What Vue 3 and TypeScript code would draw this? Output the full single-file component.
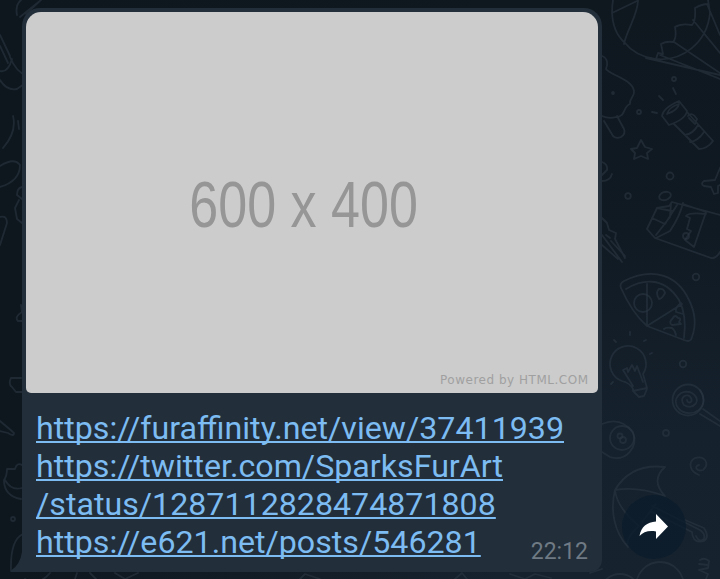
<script setup lang="ts">
interface LinkLine {
  text: string
  href: string
}

const links: LinkLine[] = [
  { text: 'https://furaffinity.net/view/37411939', href: 'https://furaffinity.net/view/37411939' },
  { text: 'https://twitter.com/SparksFurArt', href: 'https://twitter.com/SparksFurArt/status/1287112828474871808' },
  { text: '/status/1287112828474871808', href: 'https://twitter.com/SparksFurArt/status/1287112828474871808' },
  { text: 'https://e621.net/posts/546281', href: 'https://e621.net/posts/546281' },
]
const time = '22:12'
</script>

<template>
  <main class="chat">
    <svg class="wallpaper" viewBox="0 0 720 579" aria-hidden="true">
      <!-- parachute -->
      <path d="M613 0C610 20 615 34 625 43C632 52 643 57 655 59C682 62 707 43 710 13L708 0M638 0C638 15 627 29 624 44M612 13L637 1M656 59L658 53L663 54L661 44Q666 41 673 42Q677 38 675 27Q681 23 692 25Q696 21 695 8Q702 4 708 4M660 55L720 79M674 42L720 73M693 20L720 53M707 4L720 35M646 58L720 75" />
      <!-- ice cream -->
      <path d="M602 56C608 58 608 65 606 69C610 75 632 79 634 91C635 97 629 98 630 104C623 106 626 117 616 117Q609 119 602 116M604 121L613 136Q616 139 621 137Q626 134 624 129L617 116" />
      <circle cx="613" cy="93" r="1" />
      <!-- flashlight -->
      <path d="M662 116Q663 108 679 101L687 111Q686 119 669 125ZM667 114Q669 107 679 104Q678 110 667 114M674 124L699 149Q707 149 713 141L687 112M688 116Q692 111 697 119L695 124L689 118M685 135Q693 134 698 125M690 142Q698 141 704 132M673 88L676 94M659 96L663 100M652 112L657 113" />
      <circle cx="674" cy="79" r="2" /><circle cx="639" cy="112" r="2" />
      <!-- stars and dots -->
      <path d="M631 149L637 148L641 140L645 147L652 149L647 153L648 159L641 156L634 159L635 153ZM720 168L715 180L704 181Q700 184 704 186L711 187L714 194L718 193L718 186L720 185M602 162Q608 164 607 170L602 175M602 181Q610 181 612 174" />
      <circle cx="670" cy="176" r="3.5" /><circle cx="628" cy="196" r="2.8" /><circle cx="696" cy="277" r="3.3" />
      <!-- carton -->
      <path d="M655 238L647 229L657 208L669 206L672 202L720 215M655 238L711 258Q716 259 720 252M656 238L670 231Q680 216 683 203M671 203L670 217L656 235M652 218L665 224L677 205M657 208L672 211M683 204L706 212L694 247L685 240L691 231L687 229L690 218L686 216Q689 212 706 214" />
      <ellipse cx="665" cy="196" rx="6" ry="4" transform="rotate(-18 665 196)" /><circle cx="686" cy="236" r="3" />
      <!-- comet -->
      <path d="M602 218L607 223L609 230L616 233L615 239L625 258M602 235L622 262M602 245L618 259M611 241L625 256M606 235L610 238" />
      <!-- pizza -->
      <path d="M621 288Q619 284 624 281C654 266 678 276 689 300C697 316 695 329 692 337Q691 343 684 340L647 326Q632 313 621 288M626 289C641 280 663 275 679 300Q687 315 684 338M647 284L647 326L682 304M659 289Q664 288 665 293Q662 299 659 299Q655 292 659 289M673 318Q675 314 678 318Q682 318 679 322L681 324L672 325Q668 323 673 318M664 329Q666 327 672 328Q675 330 676 335M681 303Q675 307 676 312L683 314" />
      <circle cx="643" cy="303" r="9" />
      <!-- bulb -->
      <path d="M633 389Q630 383 622 381A18 18 0 1 1 643 374L647 388L633 391ZM634 392L639 397L644 396L647 389M633 386L623 370L627 368L628 372L632 365L635 371L637 366L643 382M630 332L630 335M614 340L616 342M644 341L646 340M650 354L652 353M611 384L613 382" />
      <circle cx="683" cy="364" r="3.3" />
      <!-- lollipop -->
      <circle cx="688" cy="400" r="15.5" />
      <path d="M700 390C712 408 690 420 679 409C670 399 682 388 692 393C703 400 693 411 684 405C678 397 688 392 691 398C693 402 688 405 687 400M703 409L720 421M700 414L720 426" />
      <!-- candy and swirl -->
      <path d="M602 424Q620 416 633 432C639 448 625 462 610 457L602 452" />
      <circle cx="622" cy="438" r="12" /><circle cx="620" cy="436" r="2.5" /><circle cx="623" cy="440" r="3" /><circle cx="666" cy="433" r="3" />
      <path d="M699 475C689 471 688 462 695 458C705 455 710 464 703 470C696 472 694 466 699 465" />
      <!-- umbrella -->
      <path d="M615 490Q631 463 665 467Q650 480 665 496Q637 486 615 490C610 510 614 532 628 547Q625 538 639 526Q617 508 615 490M642 522L656 504M652 506L698 529Q706 533 704 539Q699 543 696 536M650 511L692 532Q693 544 704 541Q710 537 704 528L685 520" />
      <!-- bottom doodles -->
      <circle cx="660" cy="586" r="24" /><circle cx="620" cy="594" r="20" />
      <path d="M700 560Q705 557 709 561L708 568L699 570L708 574L706 579M699 564L708 565M602 569L590 573M455 579L462 573L467 579M510 574L525 579L535 574L551 578" />
      <!-- left doodles -->
      <path d="M17 15Q15 5 21 0M20 17L41 0M26 14L43 -2M0 35L10 56M0 46L8 63M10 57Q16 72 27 76M0 71Q8 73 12 59M0 80Q7 91 17 89L24 84M13 116Q17 132 3 148M18 121L19 129M0 166Q14 157 20 165Q20 181 0 187M22 187Q17 188 17 195L22 199M19 200L15 208L17 219L22 223M0 217Q7 215 7 223L0 245M21 305L22 312Q14 317 18 321L22 321M21 378L11 378Q8 384 12 387L16 392L22 392" />
      <path d="M0 421Q13 432 14 433Q14 437 8 433L0 431M22 465Q17 462 15 469L7 469Q7 476 4 480Q4 496 21 499M5 480Q11 491 22 488M11 571Q10 540 23 534M25 579Q38 587 50 573M75 579L77 573M90 573L96 579M115 573L125 579L138 573M300 579L305 574L320 579" />
      <circle cx="13" cy="519" r="2" />
    </svg>

    <article class="bubble">
      <svg class="tail" viewBox="0 0 13 24" aria-hidden="true"><path d="M11 0H13V24H0V22.5Q9 17 11 4Z" /></svg>
      <svg class="photo" viewBox="0 0 572 381" role="img">
        <text class="dimensions" transform="translate(163.3 214.6) scale(.813 1)">600 x 400</text>
        <text class="credit" x="414" y="371.5" textLength="148">Powered by HTML.COM</text>
      </svg>
      <div class="body">
        <p class="links">
          <a v-for="link in links" :key="link.text" :href="link.href">{{ link.text }}</a>
        </p>
        <time class="time">{{ time }}</time>
      </div>
    </article>

    <button class="share" type="button">
      <svg viewBox="0 0 30 26"><path d="M17 0L29 12.4L17 25V17.5C10 16 4 18 .5 22C2 13 8 8 17 7.5Z" /></svg>
    </button>
  </main>
</template>

<style>
body {
  margin: 0;
}
</style>

<style scoped>
.chat {
  position: relative;
  display: flex;
  align-items: flex-start;
  box-sizing: border-box;
  width: 720px;
  height: 579px;
  padding: 8px 0 0 22px;
  overflow: hidden;
  background:
    linear-gradient(90deg, #0e171e 0, #0e171e 22px, transparent 500px),
    linear-gradient(180deg, #0f171f 0, #101a23 40%, #15212d 75%, #16222e 100%);
  font-family: Roboto, sans-serif;
}

.wallpaper {
  position: absolute;
  inset: 0;
  width: 720px;
  height: 579px;
  fill: none;
  stroke: #2b3743;
  stroke-opacity: 0.58;
  stroke-width: 1.8;
  stroke-linecap: round;
  stroke-linejoin: round;
}

.bubble {
  position: relative;
  box-sizing: border-box;
  width: 580px;
  height: 564px;
  padding: 4px;
  border-radius: 18px 18px 12px 0;
  background: #222e39;
}

.tail {
  position: absolute;
  left: -11px;
  bottom: 0;
  width: 13px;
  height: 24px;
  fill: #222e39;
}

.photo {
  display: block;
  width: 572px;
  height: 381px;
  border-radius: 15px 15px 5px 5px;
  background: #cccccc;
}

.dimensions {
  fill: #969696;
  font: 64px 'Liberation Sans', sans-serif;
}

.credit {
  fill: #a0a0a0;
  font: 12px 'DejaVu Sans', sans-serif;
}

.body {
  display: flex;
  align-items: flex-end;
  justify-content: space-between;
  padding: 16px 10px 0;
}

.links {
  display: flex;
  flex-direction: column;
  align-items: flex-start;
  width: 490px;
  margin: 0;
  white-space: nowrap;
}

.links a {
  color: #7cbcf3;
  font-size: 32.2px;
  line-height: 38px;
  text-decoration: underline;
  text-decoration-thickness: 2px;
  text-underline-offset: 2px;
  text-decoration-skip-ink: none;
}

.time {
  color: #6f7a84;
  font-size: 23px;
  line-height: 27px;
  margin-bottom: -4px;
}

.share {
  position: relative;
  display: flex;
  align-items: center;
  justify-content: center;
  width: 64px;
  height: 64px;
  margin: 487px 0 0 20px;
  padding: 0;
  border: 0;
  border-radius: 50%;
  background: rgba(11, 27, 43, 0.76);
}

.share svg {
  width: 30px;
  height: 26px;
  fill: #ffffff;
}
</style>
